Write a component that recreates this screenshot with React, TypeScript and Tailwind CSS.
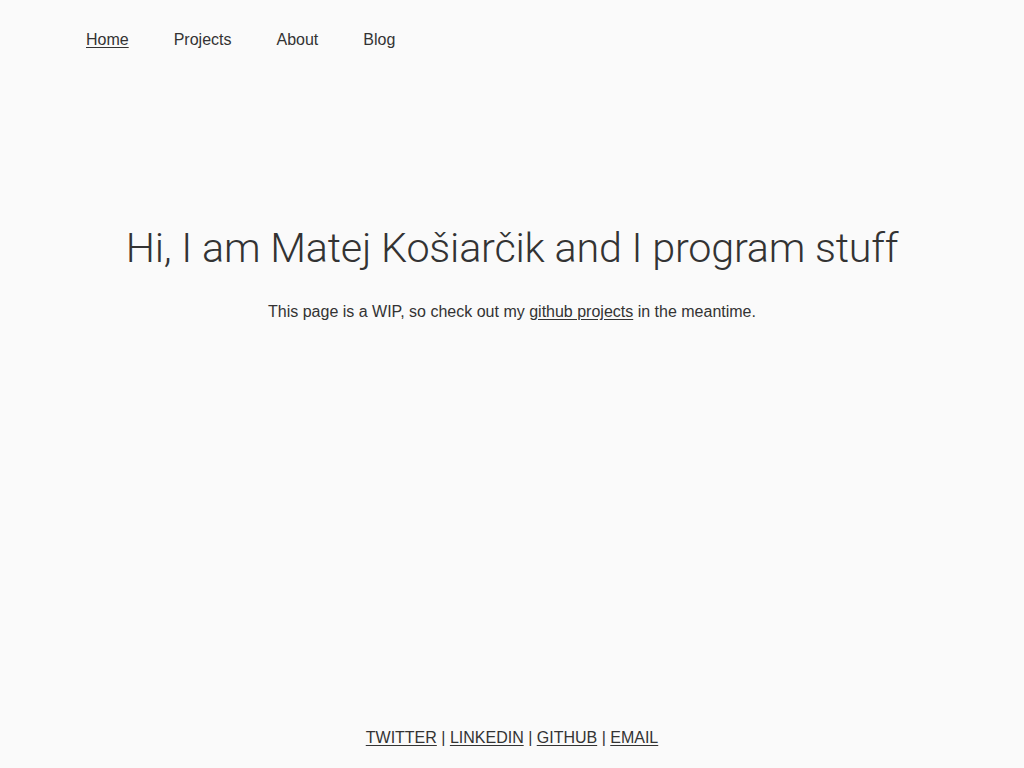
export default function App() {
  return (
    <div className="min-h-screen bg-[#fafafa] text-[#333] flex flex-col" style={{ fontFamily: '"Liberation Sans", Arial, sans-serif' }}>
      <nav className="flex gap-[45px] pl-[86px] pt-[30px] text-[16px] leading-[20px]">
        <a href="#" className="underline underline-offset-2">Home</a>
        <a href="#">Projects</a>
        <a href="#">About</a>
        <a href="#">Blog</a>
      </nav>
      <main className="flex-1 flex flex-col items-center pt-[173px]">
        <h1 className="text-[41.3px] leading-[50px] font-light tracking-[-0.2px]" style={{ fontFamily: 'Roboto, "Liberation Sans", sans-serif' }}>
          Hi, I am Matej Košiarčik and I program stuff
        </h1>
        <p className="mt-[29px] text-[16px] leading-[20px]">
          This page is a WIP, so check out my <a href="#" className="underline underline-offset-2">github projects</a> in the meantime.
        </p>
      </main>
      <footer className="text-center text-[16px] leading-[20px] pb-[20px]">
        <a href="#" className="underline underline-offset-2">TWITTER</a> | <a href="#" className="underline underline-offset-2">LINKEDIN</a> | <a href="#" className="underline underline-offset-2">GITHUB</a> | <a href="#" className="underline underline-offset-2">EMAIL</a>
      </footer>
    </div>
  );
}
